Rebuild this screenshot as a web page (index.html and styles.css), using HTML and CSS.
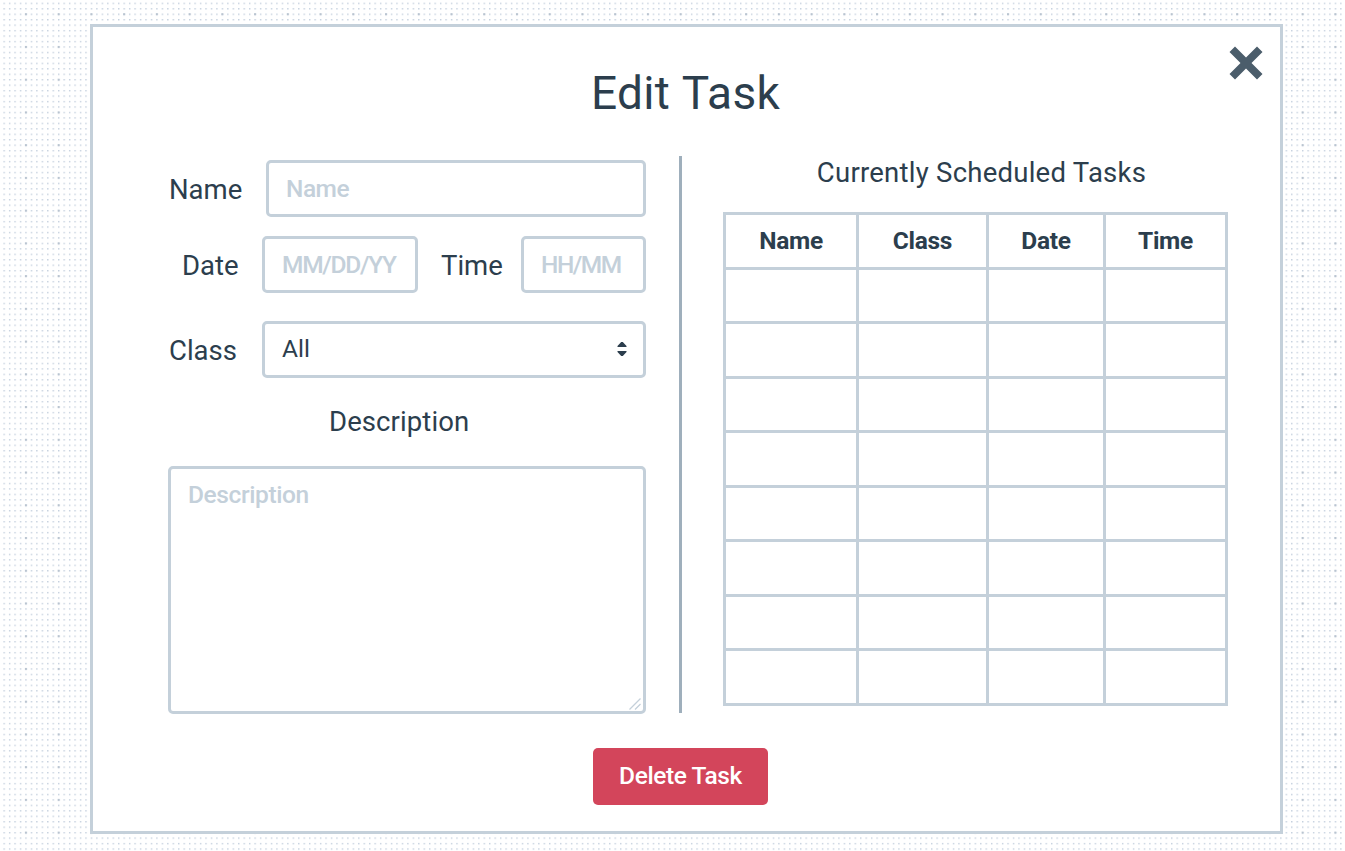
FILE: index.html
```html
<!DOCTYPE html>
<html lang="en">
<head>
<meta charset="utf-8">
<title>Edit Task</title>
<link rel="stylesheet" href="styles.css">
</head>
<body>
<svg class="dots" aria-hidden="true">
  <defs>
    <pattern id="small" x="3.45" y="2.65" width="5.456" height="5.456" patternUnits="userSpaceOnUse">
      <rect width="1.4" height="1.4" fill="#c3cfdd"/>
    </pattern>
    <pattern id="large" x="24.9" y="13.2" width="32.736" height="32.736" patternUnits="userSpaceOnUse">
      <rect width="2.1" height="2.1" fill="#b9c4d0"/>
    </pattern>
  </defs>
  <rect width="100%" height="100%" fill="url(#small)"/>
  <rect width="100%" height="100%" fill="url(#large)"/>
</svg>
<main class="modal">
  <button class="close" aria-label="Close">
    <svg viewBox="0 0 34 34" width="34" height="34"><path d="M6 0.5 17 11.5 28 0.5 33.5 6 22.5 17 33.5 28 28 33.5 17 22.5 6 33.5 0.5 28 11.5 17 0.5 6Z" fill="#4b5d6b"/></svg>
  </button>
  <h1 class="title">Edit Task</h1>
  <div class="columns">
    <form class="form">
      <div class="row row-name">
        <label class="label" for="name">Name</label>
        <input class="field" id="name" placeholder="Name">
      </div>
      <div class="row row-when">
        <label class="label" for="date">Date</label>
        <input class="field field-date" id="date" placeholder="MM/DD/YY">
        <label class="label label-time" for="time">Time</label>
        <input class="field field-time" id="time" placeholder="HH/MM">
      </div>
      <div class="row row-class">
        <label class="label" for="class">Class</label>
        <div class="select-wrap">
          <select class="field field-class" id="class"><option>All</option></select>
          <svg class="arrows" viewBox="0 0 10 14" width="10" height="14"><path d="M4.2 0H5.8L9.5 4V5H.5V4ZM.5 9H9.5V10L5.8 14H4.2L.5 10Z" fill="#2c3e4d"/></svg>
        </div>
      </div>
      <label class="label label-desc" for="desc">Description</label>
      <div class="area-wrap">
        <textarea class="field area" id="desc" placeholder="Description"></textarea>
        <svg class="grip" viewBox="0 0 12 12" width="12" height="12"><path d="M.5 11.5 11.5.5M6 11.5 11.5 6" stroke="#c4d0da" stroke-width="1.3" fill="none"/></svg>
      </div>
    </form>
    <div class="divider"></div>
    <section class="scheduled">
      <h2 class="subtitle">Currently Scheduled Tasks</h2>
      <table class="tasks">
        <colgroup><col class="c1"><col class="c2"><col class="c3"><col class="c4"></colgroup>
        <thead><tr><th>Name</th><th>Class</th><th>Date</th><th>Time</th></tr></thead>
        <tbody>
          <tr class="short"><td></td><td></td><td></td><td></td></tr>
          <tr><td></td><td></td><td></td><td></td></tr>
          <tr class="short"><td></td><td></td><td></td><td></td></tr>
          <tr><td></td><td></td><td></td><td></td></tr>
          <tr class="short"><td></td><td></td><td></td><td></td></tr>
          <tr><td></td><td></td><td></td><td></td></tr>
          <tr class="short"><td></td><td></td><td></td><td></td></tr>
          <tr><td></td><td></td><td></td><td></td></tr>
        </tbody>
      </table>
    </section>
  </div>
  <button class="delete">Delete Task</button>
</main>
</body>
</html>
```
FILE: styles.css
```css
* { box-sizing: border-box; }

body {
  margin: 0;
  height: 851px;
  overflow: hidden;
  background: #fff;
  color: #2c3e4d;
  font-family: Roboto, sans-serif;
}

.dots {
  position: absolute;
  inset: 0;
  width: 100%;
  height: 100%;
}

.modal {
  position: relative;
  width: 1193px;
  height: 810px;
  margin: 24px 0 0 90px;
  border: 3px solid #c4d0da;
  background: #fff;
}

.close {
  position: absolute;
  top: 19px;
  right: 17px;
  padding: 0;
  border: 0;
  background: none;
  line-height: 0;
}

.title {
  margin: 0;
  padding: 39px 2px 0 0;
  font-size: 46px;
  font-weight: 400;
  line-height: 54px;
  letter-spacing: 0.3px;
  word-spacing: 1px;
  text-align: center;
}

.columns {
  display: flex;
  padding: 36px 0 0 75px;
}

.form {
  width: 478px;
  padding-top: 4px;
}

.row {
  display: flex;
  align-items: center;
  height: 57px;
}

.label {
  flex: none;
  padding: 2px 0 0 1px;
  font-size: 27.5px;
  line-height: 32px;
}

.row-name .label { width: 98px; }

.row-when {
  margin-top: 19px;
  padding-left: 13px;
}

.row-when .label { width: 81px; }
.row-when .label-time { width: 80px; margin-left: 23px; padding-left: 0; }

.row-class { margin-top: 28px; }
.row-class .label { width: 94px; }

.field {
  display: block;
  width: 100%;
  min-width: 0;
  height: 57px;
  margin: 0;
  padding: 0 16px 1px 17px;
  border: 3px solid #c4d0da;
  border-radius: 5px;
  background: #fff;
  color: #2c3e4d;
  font: 500 24.5px/30px Roboto, sans-serif;
  letter-spacing: -0.5px;
  outline: 0;
  appearance: none;
}

.field::placeholder { color: #c4d0da; opacity: 1; }

.field-date { flex: none; width: 156px; letter-spacing: -1.3px; }
.field-time { flex: none; width: 125px; letter-spacing: -1.5px; }
.field-class { font-weight: 400; letter-spacing: 0; }

.select-wrap { position: relative; flex: 1; }

.arrows {
  position: absolute;
  top: 21px;
  right: 19px;
}

.label-desc {
  display: block;
  margin: 26px 0 0 160px;
  letter-spacing: 0.1px;
}

.area-wrap {
  position: relative;
  margin-top: 28px;
}

.area {
  height: 248px;
  padding-top: 11px;
  letter-spacing: -0.4px;
  resize: none;
}

.grip {
  position: absolute;
  right: 5px;
  bottom: 4px;
}

.divider {
  width: 3px;
  height: 557px;
  margin-left: 33px;
  background: #9fafbc;
}

.scheduled { margin-left: 41px; }

.subtitle {
  margin: 0;
  padding-left: 12px;
  font-size: 27.5px;
  font-weight: 400;
  line-height: 34px;
  letter-spacing: 0.25px;
  text-align: center;
}

.tasks {
  width: 505px;
  margin-top: 22px;
  border-collapse: collapse;
  table-layout: fixed;
}

.tasks tr { height: 55px; }
.tasks .short { height: 54px; }

.tasks th,
.tasks td {
  padding: 0;
  border: 3px solid #c4d0da;
}

.tasks th {
  font-size: 24.5px;
  font-weight: 700;
  line-height: 30px;
  letter-spacing: -0.3px;
}

.c1 { width: 133px; }
.c2 { width: 130px; }
.c3 { width: 117px; }

.delete {
  display: block;
  width: 175px;
  height: 57px;
  margin: 34px 0 0 500px;
  padding: 0 0 1px;
  border: 0;
  border-radius: 5px;
  background: #d3455b;
  color: #fff;
  font: 500 24.5px/30px Roboto, sans-serif;
  letter-spacing: -0.4px;
}
```
